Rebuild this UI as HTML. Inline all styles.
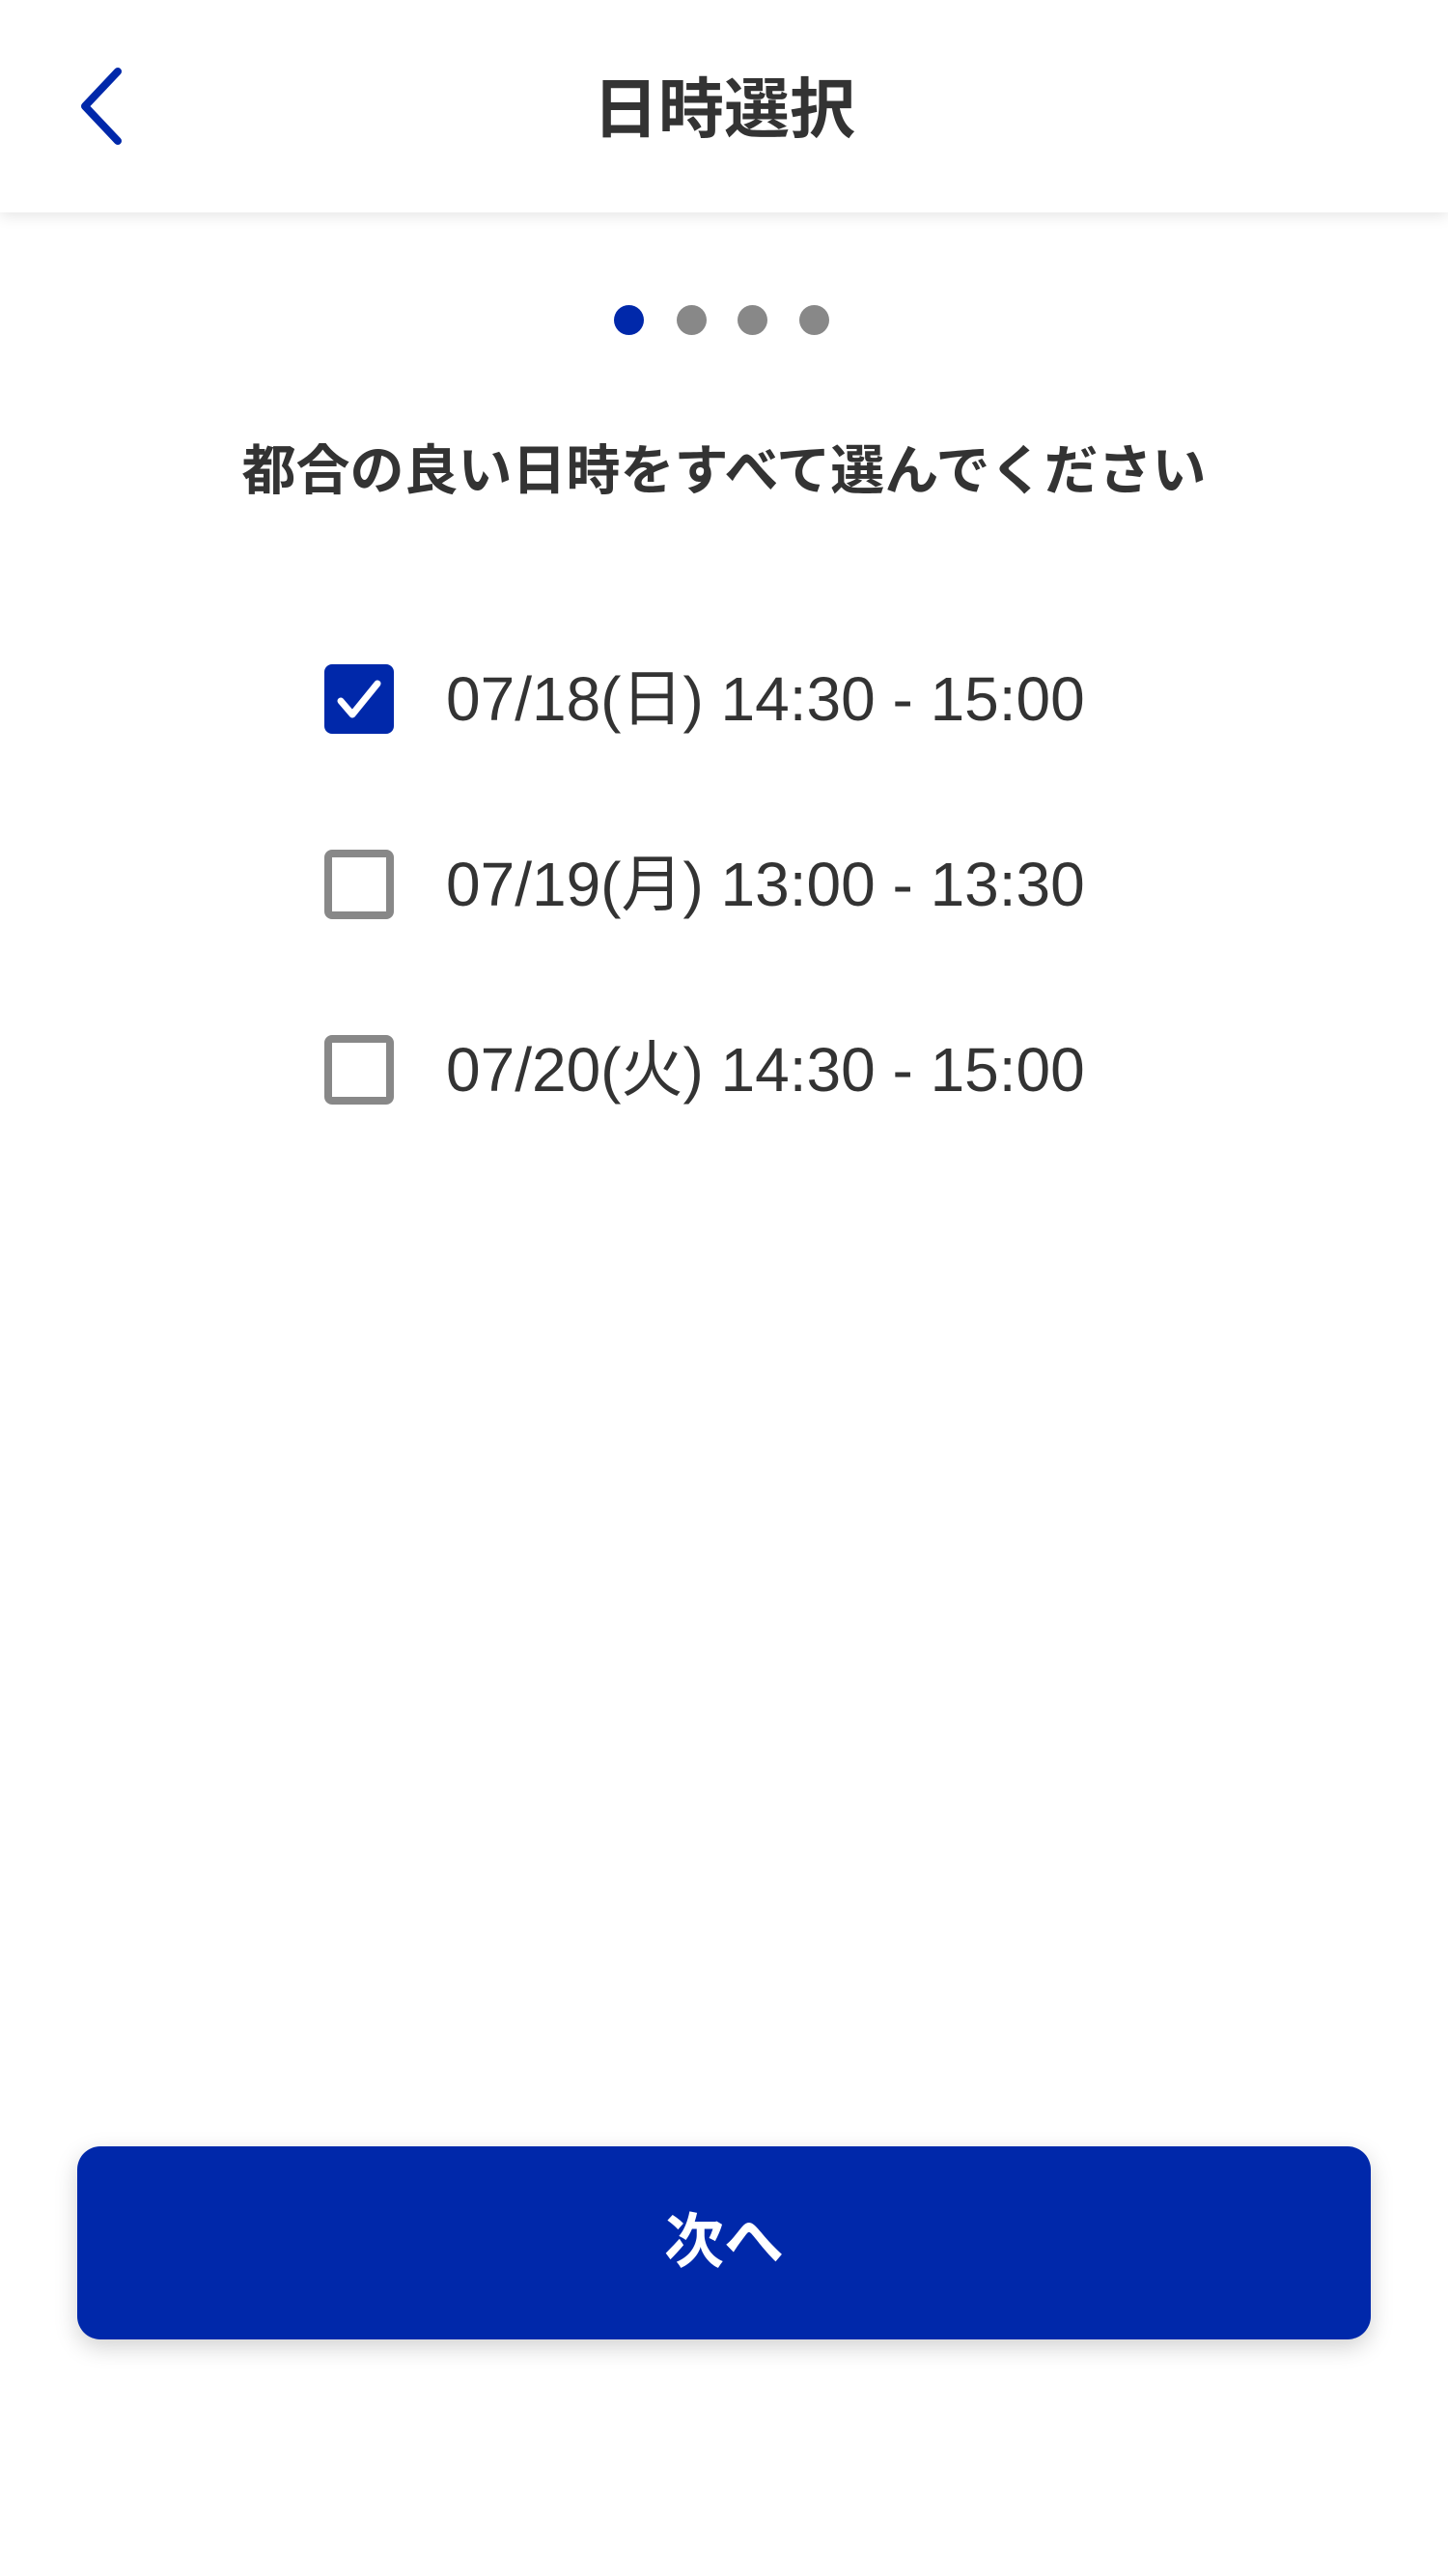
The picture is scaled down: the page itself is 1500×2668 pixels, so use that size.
<!DOCTYPE html>
<html><head><meta charset="utf-8"><style>
*{margin:0;padding:0;box-sizing:border-box}
html,body{width:1500px;height:2668px;background:#fff;overflow:hidden;font-family:"Liberation Sans","Noto Sans CJK JP",sans-serif;color:#333}
.hdr{position:absolute;left:0;top:0;width:1500px;height:220px;background:#fff;box-shadow:0 4px 14px rgba(0,0,0,0.10);z-index:2}
.title{position:absolute;left:0;width:1500px;top:72px;text-align:center;font-size:68px;font-weight:bold;line-height:84px;color:#333}
.dot{position:absolute;top:316px;width:31px;height:31px;border-radius:50%;background:#888}
.sub{position:absolute;left:0;width:1500px;top:456px;text-align:center;font-size:56px;font-weight:bold;line-height:64px;color:#333}
.cb{position:absolute;left:336px;width:72px;height:72px;border-radius:8px;border:8px solid #888;background:#fff}
.cb.on{background:#0028aa;border-color:#0028aa}
.txt{position:absolute;left:462px;font-size:64px;line-height:72px;color:#333;white-space:nowrap}
.btn{position:absolute;left:80px;top:2223px;width:1340px;height:200px;border-radius:24px;background:#0028aa;box-shadow:0 8px 24px rgba(0,0,0,0.18);color:#fff;font-size:62px;font-weight:bold;text-align:center;line-height:200px}
</style></head><body>
<div class="hdr">
<svg style="position:absolute;left:76px;top:68px" width="56" height="84" viewBox="0 0 56 84"><path d="M46 6 L12 42 L46 78" fill="none" stroke="#0028aa" stroke-width="8" stroke-linecap="round" stroke-linejoin="round"/></svg>
<div class="title">日時選択</div>
</div>
<div class="dot" style="left:636px;background:#0028aa"></div>
<div class="dot" style="left:701px"></div>
<div class="dot" style="left:764px"></div>
<div class="dot" style="left:828px"></div>
<div class="sub">都合の良い日時をすべて選んでください</div>

<div class="cb on" style="top:688px"><svg style="position:absolute;left:-8px;top:-8px" width="72" height="72" viewBox="0 0 72 72"><path d="M17 38 L29 52 L55 20" fill="none" stroke="#fff" stroke-width="7" stroke-linecap="round" stroke-linejoin="round"/></svg></div>
<div class="txt" style="top:688px">07/18(日) 14:30 - 15:00</div>

<div class="cb" style="top:880px"></div>
<div class="txt" style="top:880px">07/19(月) 13:00 - 13:30</div>

<div class="cb" style="top:1072px"></div>
<div class="txt" style="top:1072px">07/20(火) 14:30 - 15:00</div>

<div class="btn">次へ</div>
</body></html>
